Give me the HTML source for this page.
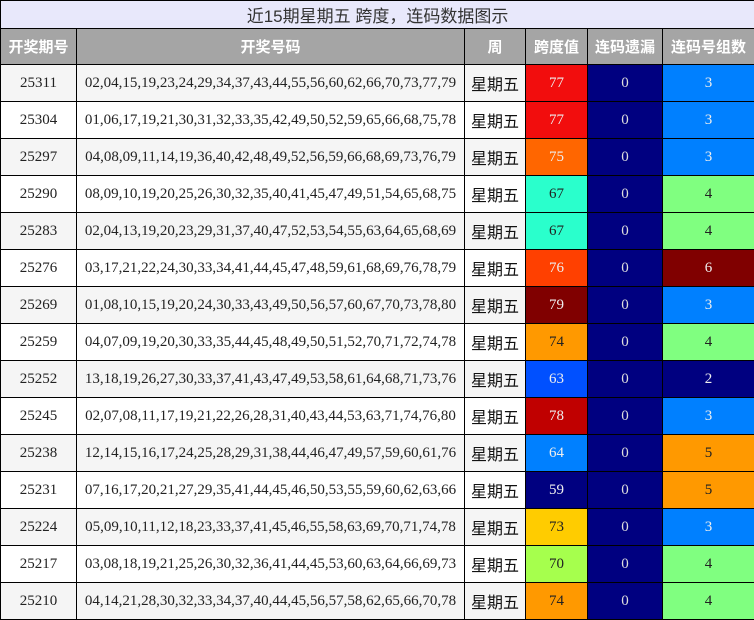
<!DOCTYPE html>
<html><head><meta charset="utf-8"><style>
body{margin:0;background:#fff;width:754px;height:620px;overflow:hidden}
table{border-collapse:collapse;table-layout:fixed;width:754px;font-family:"Liberation Serif","Noto Serif CJK SC",serif;font-size:15px;color:#222}
td,th{border:1px solid #000;text-align:center;padding:0;overflow:hidden;white-space:nowrap}
.t td{height:27px;background:#e8e8fb;color:#333;font-family:"Liberation Sans","Noto Sans CJK SC",sans-serif;font-size:17px}
th{height:35px;background:#a5a5a5;color:#fff;font-family:"Liberation Sans","Noto Sans CJK SC",sans-serif;font-size:15px;font-weight:bold}
tr.r td{height:36px}
tr.r:nth-child(odd) td{background:#f5f5f5}
tr.r:nth-child(even) td{background:#fff}
td.z{font-family:"Liberation Sans","Noto Sans CJK SC",sans-serif;font-size:16px;color:#111}
td.n{font-size:15px}
tr.r td.m{background:#000080;color:#ddd}
.w{color:#eee}
</style></head><body>
<table>
<colgroup><col style="width:76px"><col style="width:388px"><col style="width:61px"><col style="width:62px"><col style="width:75px"><col style="width:92px"></colgroup>
<tbody>
<tr class="t"><td colspan="6">近15期星期五 跨度，连码数据图示</td></tr>
<tr><th>开奖期号</th><th>开奖号码</th><th>周</th><th>跨度值</th><th>连码遗漏</th><th>连码号组数</th></tr>
<tr class="r"><td>25311</td><td class="n">02,04,15,19,23,24,29,34,37,43,44,55,56,60,62,66,70,73,77,79</td><td class="z">星期五</td><td class="w" style="background:#f20d0d!important">77</td><td class="m">0</td><td class="w" style="background:#0080ff!important">3</td></tr>
<tr class="r"><td>25304</td><td class="n">01,06,17,19,21,30,31,32,33,35,42,49,50,52,59,65,66,68,75,78</td><td class="z">星期五</td><td class="w" style="background:#f20d0d!important">77</td><td class="m">0</td><td class="w" style="background:#0080ff!important">3</td></tr>
<tr class="r"><td>25297</td><td class="n">04,08,09,11,14,19,36,40,42,48,49,52,56,59,66,68,69,73,76,79</td><td class="z">星期五</td><td class="w" style="background:#ff6600!important">75</td><td class="m">0</td><td class="w" style="background:#0080ff!important">3</td></tr>
<tr class="r"><td>25290</td><td class="n">08,09,10,19,20,25,26,30,32,35,40,41,45,47,49,51,54,65,68,75</td><td class="z">星期五</td><td style="background:#2affcc!important">67</td><td class="m">0</td><td style="background:#80ff80!important">4</td></tr>
<tr class="r"><td>25283</td><td class="n">02,04,13,19,20,23,29,31,37,40,47,52,53,54,55,63,64,65,68,69</td><td class="z">星期五</td><td style="background:#2affcc!important">67</td><td class="m">0</td><td style="background:#80ff80!important">4</td></tr>
<tr class="r"><td>25276</td><td class="n">03,17,21,22,24,30,33,34,41,44,45,47,48,59,61,68,69,76,78,79</td><td class="z">星期五</td><td class="w" style="background:#ff4000!important">76</td><td class="m">0</td><td class="w" style="background:#800000!important">6</td></tr>
<tr class="r"><td>25269</td><td class="n">01,08,10,15,19,20,24,30,33,43,49,50,56,57,60,67,70,73,78,80</td><td class="z">星期五</td><td class="w" style="background:#800000!important">79</td><td class="m">0</td><td class="w" style="background:#0080ff!important">3</td></tr>
<tr class="r"><td>25259</td><td class="n">04,07,09,19,20,30,33,35,44,45,48,49,50,51,52,70,71,72,74,78</td><td class="z">星期五</td><td style="background:#ff9900!important">74</td><td class="m">0</td><td style="background:#80ff80!important">4</td></tr>
<tr class="r"><td>25252</td><td class="n">13,18,19,26,27,30,33,37,41,43,47,49,53,58,61,64,68,71,73,76</td><td class="z">星期五</td><td class="w" style="background:#0050ff!important">63</td><td class="m">0</td><td class="w" style="background:#000080!important">2</td></tr>
<tr class="r"><td>25245</td><td class="n">02,07,08,11,17,19,21,22,26,28,31,40,43,44,53,63,71,74,76,80</td><td class="z">星期五</td><td class="w" style="background:#c00000!important">78</td><td class="m">0</td><td class="w" style="background:#0080ff!important">3</td></tr>
<tr class="r"><td>25238</td><td class="n">12,14,15,16,17,24,25,28,29,31,38,44,46,47,49,57,59,60,61,76</td><td class="z">星期五</td><td class="w" style="background:#0080ff!important">64</td><td class="m">0</td><td style="background:#ff9900!important">5</td></tr>
<tr class="r"><td>25231</td><td class="n">07,16,17,20,21,27,29,35,41,44,45,46,50,53,55,59,60,62,63,66</td><td class="z">星期五</td><td class="w" style="background:#000080!important">59</td><td class="m">0</td><td style="background:#ff9900!important">5</td></tr>
<tr class="r"><td>25224</td><td class="n">05,09,10,11,12,18,23,33,37,41,45,46,55,58,63,69,70,71,74,78</td><td class="z">星期五</td><td style="background:#ffcc00!important">73</td><td class="m">0</td><td class="w" style="background:#0080ff!important">3</td></tr>
<tr class="r"><td>25217</td><td class="n">03,08,18,19,21,25,26,30,32,36,41,44,45,53,60,63,64,66,69,73</td><td class="z">星期五</td><td style="background:#a6ff4d!important">70</td><td class="m">0</td><td style="background:#80ff80!important">4</td></tr>
<tr class="r"><td>25210</td><td class="n">04,14,21,28,30,32,33,34,37,40,44,45,56,57,58,62,65,66,70,78</td><td class="z">星期五</td><td style="background:#ff9900!important">74</td><td class="m">0</td><td style="background:#80ff80!important">4</td></tr>
</tbody></table>
</body></html>
